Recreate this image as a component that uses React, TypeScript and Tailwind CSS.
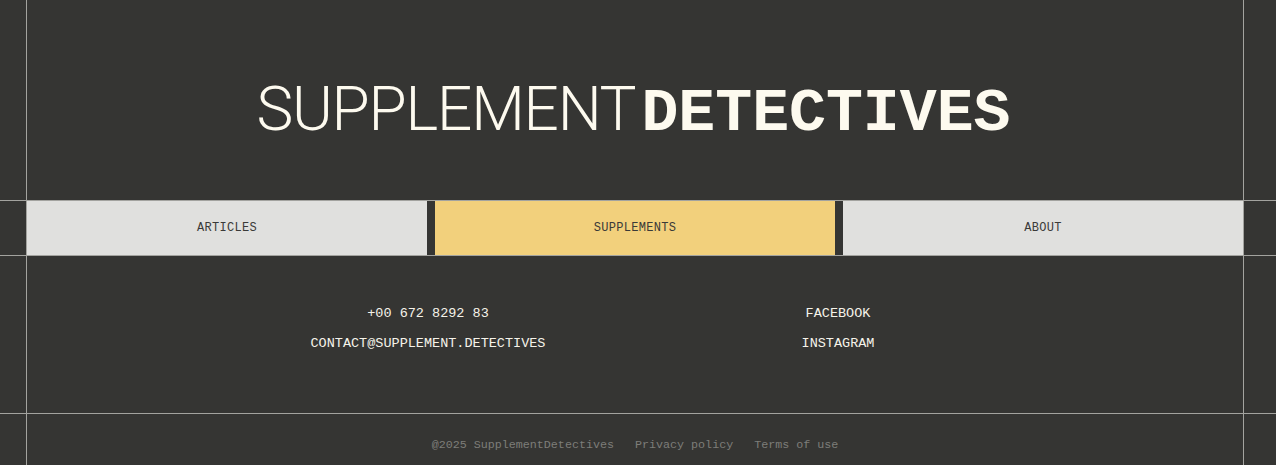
import React from "react";

const mono = "font-['Liberation_Mono','DejaVu_Sans_Mono',monospace]";

export default function App() {
  return (
    <div className="min-h-[465px] bg-[#353533] text-[#f7f4ea] overflow-hidden">
      {/* Header */}
      <div className="border-b border-[#a3a39f]">
        <div className="ml-[26px] w-[1218px] h-[200px] border-x border-[#a3a39f] flex items-center justify-center pt-[22px] pr-[3px]">
          <h1 className="flex items-baseline gap-[6px] text-[#fdfaef] leading-none">
            <span className="font-['Roboto',sans-serif] font-light text-[62px] tracking-[-1.2px]">SUPPLEMENT</span>
            <span className={`${mono} font-bold text-[61.5px]`}>DETECTIVES</span>
          </h1>
        </div>
      </div>

      {/* Nav */}
      <div className="border-b border-[#a3a39f]">
        <div className="ml-[26px] w-[1218px] border-x border-[#a3a39f]">
          <nav className={`${mono} grid grid-cols-3 gap-2 h-[54px] text-[12px] tracking-[0.3px] text-[#3a3a38]`}>
            <a className="flex items-center justify-center bg-[#e0e0de]">ARTICLES</a>
            <a className="flex items-center justify-center bg-[#f2d07c]">SUPPLEMENTS</a>
            <a className="flex items-center justify-center bg-[#e0e0de]">ABOUT</a>
          </nav>
        </div>
      </div>

      {/* Contact */}
      <div className="border-b border-[#a3a39f]">
        <div className={`${mono} ml-[26px] w-[1218px] h-[157px] border-x border-[#a3a39f] text-[13.5px] text-[#f5f3ea] flex pt-[48px]`}>
          <div className="w-[802px] flex flex-col items-center gap-[10px]">
            <span>+00 672 8292 83</span>
            <span>CONTACT@SUPPLEMENT.DETECTIVES</span>
          </div>
          <div className="ml-[9px] w-[0px] flex flex-col items-center gap-[10px]">
            <span>FACEBOOK</span>
            <span>INSTAGRAM</span>
          </div>
        </div>
      </div>

      {/* Footer */}
      <div className="ml-[26px] w-[1218px] h-[52px] border-x border-[#a3a39f]">
        <div className={`${mono} flex justify-center items-center gap-[21px] pt-[23px] text-[11.7px] text-[#7d7d79]`}>
          <span>@2025 SupplementDetectives</span>
          <a>Privacy policy</a>
          <a>Terms of use</a>
        </div>
      </div>
    </div>
  );
}
